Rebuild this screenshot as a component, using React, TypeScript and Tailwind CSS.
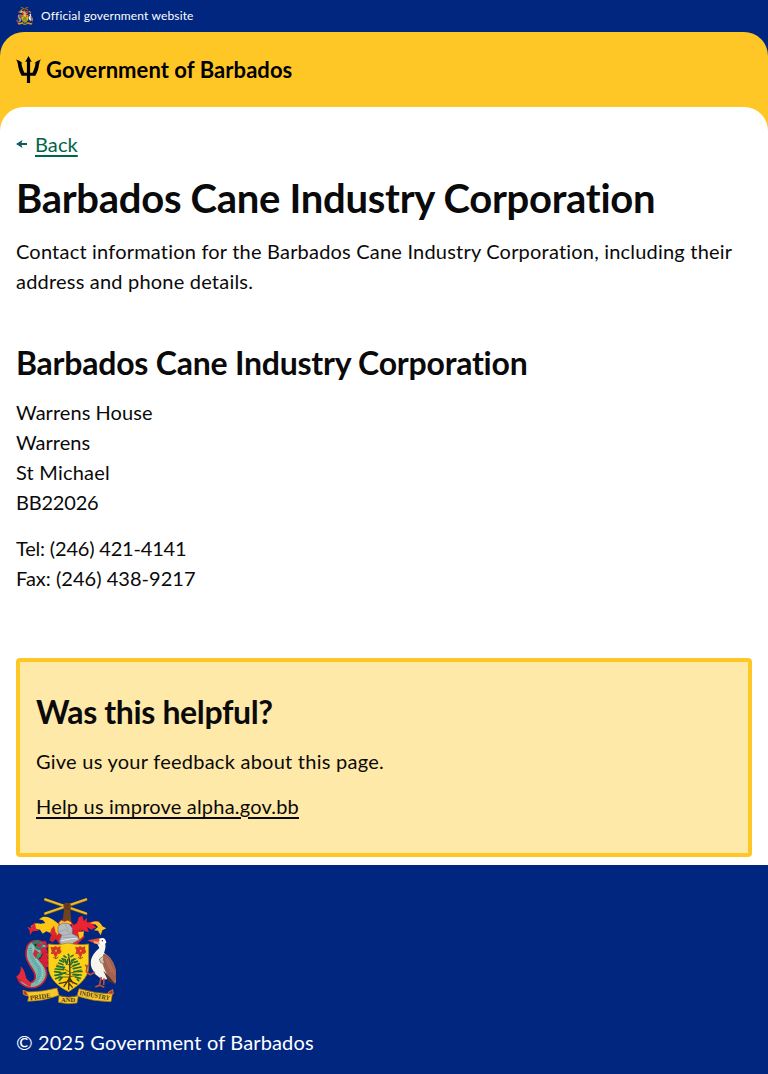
import React from "react";

function Crest({ className }: { className: string }) {
  return (
    <svg viewBox="48 36 300 324" className={className} role="img">
      {/* crossed canes and arm */}
      <g stroke="#8a6a1a" strokeWidth="9" strokeLinecap="round">
        <path d="M136 44 L258 86" />
        <path d="M136 86 L258 44" />
      </g>
      <g stroke="#f0bd22" strokeWidth="6" strokeLinecap="round">
        <path d="M136 43 L258 85" />
        <path d="M136 85 L258 43" />
      </g>
      <path d="M190 60 L196 53 L209 54 L214 62 L211 76 L214 112 L187 112 L192 76 Z" fill="#70421f" />
      <path d="M198 56 V68 M204 56 V68 M193 72 H210" stroke="#3f2512" strokeWidth="1.5" />
      {/* mantling */}
      <path d="M172 130 C162 140 152 150 148 166 L158 172 L168 162 L178 178 H232 L254 156 L242 140 L252 132 L244 122 L225 128 Z" fill="#d9232b" />
      <path d="M180 118 C164 112 154 92 128 96 L117 103 L129 106 L136 114 L122 116 C112 114 104 112 92 124 L106 132 L120 134 L128 146 L139 139 L151 144 L158 132 L166 136 L162 148 L172 150 L182 136 Z" fill="#fcc517" />
      <path d="M82 126 L92 128 L104 112 L108 130 L116 137 L98 139 L90 151 L89 137 Z" fill="#e32636" />
      <path d="M154 132 L162 122 L166 140 L172 148 L160 154 L150 146 Z" fill="#dd2930" />
      <path d="M216 116 C224 122 230 118 234 106 C234 96 240 92 248 94 L251 108 L261 98 L260 112 C274 112 286 104 300 110 L290 118 L278 119 L289 127 L274 134 L261 126 L267 142 L252 138 L242 129 L232 137 L214 128 Z" fill="#ec2330" />
      <path d="M270 115 C286 105 301 108 307 124 L319 130 L307 136 L302 151 L294 137 L282 136 L294 126 L286 118 Z" fill="#fcc41d" />
      <path d="M234 142 L252 139 L250 153 L239 163 Z" fill="#fcc41d" />
      {/* helmet */}
      <path d="M176 113 L184 105 L194 109 L203 105 L213 110 L218 118 L178 121 Z" fill="#f5c124" stroke="#c52127" strokeWidth="3" />
      <path d="M174 124 L187 115 L207 116 L217 130 L216 146 L232 154 L238 164 L214 177 L186 183 L178 168 L186 150 L174 143 Z" fill="#b6bbc0" stroke="#747980" strokeWidth="2" />
      <path d="M175 141 L196 134 L211 145 M187 151 L214 147 M189 158 L231 156 M195 119 L207 136" fill="none" stroke="#858a90" strokeWidth="1.5" />
      <path d="M185 167 L215 161 L231 161" fill="none" stroke="#eceeef" strokeWidth="3" />
      {/* dolphin */}
      <path d="M133 199 L150 207 L141 218 L153 228 L141 232 L150 246 L135 247 L139 267 L128 281 L117 229 Z" fill="#d91f38" />
      <path d="M82 183 C91 164 119 162 134 177 L143 183 L134 190 L140 198 C130 205 116 206 109 214 C119 228 142 243 140 269 C136 297 108 314 82 306 C66 302 57 290 53 279 C72 296 94 299 103 286 C112 270 98 254 88 238 C77 222 76 200 82 183 Z" fill="#78b8ad" stroke="#c91f38" strokeWidth="5" />
      <path d="M91 190 C91 212 101 229 113 242 C124 258 119 281 105 291" fill="none" stroke="#4f9aa5" strokeWidth="10" strokeDasharray="2 3" />
      <path d="M99 181 C100 212 107 223 119 239 C132 252 130 275 117 289" fill="none" stroke="#a9d8c8" strokeWidth="5" strokeDasharray="3 3" />
      <path d="M94 171 L115 164 L122 174 L137 177 L123 183 L139 189 L131 198 L109 193 Z" fill="#34796c" />
      <path d="M108 173 L128 181 L117 188 Z M104 193 L119 204 L107 220 L99 208 Z M120 170 L137 168 L141 179 L128 175 Z M122 190 L140 186 L136 200 L122 204 Z" fill="#dc2039" />
      <circle cx="107" cy="180" r="3" fill="#231f20" />
      <path d="M48 276 C61 267 63 258 62 244 C76 256 75 270 80 281 C87 289 98 293 91 305 C75 302 65 284 48 276 Z" fill="#e42b3d" />
      <path d="M111 205 L126 205 L121 217 L109 222 Z" fill="#31a362" />
      {/* shield */}
      <path d="M145 177 Q172 183 205 174 Q239 182 266 177 V244 C266 281 235 302 206 320 C174 305 146 280 145 245 Z" fill="#fcd116" stroke="#a98016" strokeWidth="2" />
      {[151, 225].map((x) => (
        <g key={x} transform={`translate(${x} 183)`}>
          <path d="M0 2 L9 4 L15 0 L22 4 L31 0 L30 10 L34 17 L28 24 L22 23 L20 31 L12 31 L10 24 L1 24 L4 15 Z" fill="#de392b" />
          <path d="M4 6 L13 14 L8 22 M29 6 L20 14 L26 22 M16 5 V26 M5 14 H29" stroke="#a33a1c" strokeWidth="1.5" fill="none" />
          <circle cx="17" cy="14" r="3" fill="#f6ad22" />
          <path d="M16 30 V38 L9 34 M17 38 L24 33" stroke="#8e4a18" strokeWidth="3" fill="none" />
        </g>
      ))}
      {/* bearded fig tree */}
      <path d="M206 216 L209 230 L210 281 L220 295 M207 277 L206 314 M206 283 L191 306 M204 290 L176 296 M207 287 L232 298 M206 294 L218 308" stroke="#4a2c12" strokeWidth="4" fill="none" />
      <path d="M207 260 L170 239 M207 269 L168 260 M207 250 L240 235 M207 266 L244 254 M207 275 L237 271 M207 240 L184 221 M207 234 L229 221 M207 276 L175 276" stroke="#4c4a16" strokeWidth="2.5" />
      <g stroke="#1f7133" strokeWidth="5" strokeLinecap="round" fill="none">
        <path d="M205 208 L207 213 M198 217 L192 213 M213 215 L219 211 M196 224 L187 221 M215 226 L224 222 M191 231 L179 226 M222 232 L232 229 M189 239 L176 234 M219 242 L237 236 M193 247 L170 244" />
        <path d="M190 254 L166 252 M181 262 L164 260 M185 268 L165 271 M197 263 L178 268 M220 251 L243 246 M222 260 L246 259 M219 268 L244 270 M226 276 L241 280 M181 276 L167 281 M200 238 L196 226 M211 240 L218 231 M186 278 L178 286 M232 283 L236 287 M203 224 L202 232" />
      </g>
      {/* pelican */}
      <path d="M306 165 C320 173 318 187 312 204 C335 218 352 245 347 292 L326 282 L307 284 L286 268 L275 249 C267 225 278 207 298 189 L291 174 Z" fill="#f7f4ed" />
      <path d="M310 207 C325 204 344 230 350 264 L346 298 L334 287 L320 268 L312 249 L306 232 Z" fill="#a5614d" />
      <path d="M314 214 L335 262 M322 220 L344 268" stroke="#b97a64" strokeWidth="3" />
      <path d="M310 257 L325 289 L347 299 L331 279" fill="#4a3234" />
      <path d="M298 222 L312 212 L310 226 L316 236 L302 233 Z" fill="#dcc7b8" stroke="#71564b" strokeWidth="2" />
      <path d="M262 166 L300 159 L317 166 L303 177 L280 173 Z" fill="#e94b2f" />
      <path d="M281 168 L302 171 L298 179 L282 175 Z" fill="#efad79" />
      <path d="M298 162 Q316 153 319 174 L305 181 L298 174 Z" fill="#fff" />
      <circle cx="307" cy="167" r="2.2" fill="#24211f" />
      <path d="M285 262 L270 269 L259 260 L261 247 L256 239 M261 247 L267 237 M304 276 L298 301 L286 306 M298 300 L313 307 M312 280 L311 300" stroke="#bc5138" strokeWidth="5" fill="none" />
      {/* motto ribbon */}
      <path d="M69 316 L85 321 L82 333 L70 328 Z M325 321 L338 314 L340 326 L327 334 Z" fill="#d52730" stroke="#f0ae1c" strokeWidth="2" />
      <path d="M78 321 Q128 321 171 309 L177 331 Q132 349 83 349 L86 336 Z M237 311 Q284 325 337 327 L333 350 Q279 350 231 333 Z M177 332 Q206 341 235 332 L231 354 Q203 359 175 352 Z" fill="#f8c72a" stroke="#a27518" strokeWidth="2" />
      <g fontFamily="Liberation Serif, serif" fontSize="20" fontWeight="700" fill="#473719">
        <text x="91" y="346" textLength="62" lengthAdjust="spacingAndGlyphs" transform="rotate(-8 91 346)">PRIDE</text>
        <text x="183" y="352" textLength="43" lengthAdjust="spacingAndGlyphs">AND</text>
        <text x="238" y="330" textLength="92" lengthAdjust="spacingAndGlyphs" transform="rotate(10 238 330)">INDUSTRY</text>
      </g>
    </svg>
  );
}

function Trident() {
  return (
    <svg viewBox="0 0 25 27" className="h-[27px] w-[25px]" fill="#000">
      <path d="M12.5 0 L15.8 6 Q14.7 5.4 14.1 5.4 V16.8 H16.6 C18.4 13 19.4 9.4 19.6 7 L18.2 7.4 Q20.6 4.4 25 3.5 Q23.6 5 23.2 7.8 C22.6 12 21.6 16 19.4 19.8 H14.1 V27 H10.9 V19.8 H5.6 C3.4 16 2.4 12 1.8 7.8 Q1.4 5 0 3.5 Q4.4 4.4 6.8 7.4 L5.4 7 C5.6 9.4 6.6 13 8.4 16.8 H10.9 V5.4 Q10.3 5.4 9.2 6 Z" />
    </svg>
  );
}

export default function App() {
  return (
    <div className="min-h-[1074px] bg-white font-['Lato',sans-serif] text-[20px] leading-[30px] text-[#0a0a0a]">
      <div className="bg-[#00267f]">
        <div className="flex h-8 items-center gap-2 px-4 text-white">
          <Crest className="h-[18px] w-[17px]" />
          <span className="text-[12px] leading-4 tracking-[0.15px]">Official government website</span>
        </div>
        <header className="rounded-t-[24px] bg-[#ffc726]">
          <div className="flex h-[75px] items-center gap-[5px] px-4">
            <Trident />
            <span className="text-[22px] leading-7 font-bold tracking-[0.06px] text-black">Government of Barbados</span>
          </div>
          <div className="h-6 rounded-t-[24px] bg-white" />
        </header>
      </div>
      <main className="-mt-0.5 px-4">
        <a href="#" className="flex h-[30px] w-fit items-center gap-2 text-[#00654a]">
          <svg viewBox="0 0 11 8" className="h-2 w-[11px]" fill="#0e5f64">
            <path d="M0 4 L6.5 0 L5.5 3 H11 V5 H5.5 L6.5 8 Z" />
          </svg>
          <span className="tracking-[0.1px] underline decoration-2 underline-offset-[3px]">Back</span>
        </a>
        <h1 className="mt-3.5 text-[40px] leading-[50px] font-bold tracking-[-0.29px] whitespace-nowrap">Barbados Cane Industry Corporation</h1>
        <p className="mt-[13px] tracking-[0.2px]">
          Contact information for the Barbados Cane Industry Corporation, including their<br />address and phone details.
        </p>
        <h2 className="mt-[47px] text-[32px] leading-[40px] font-bold tracking-[-0.23px]">Barbados Cane Industry Corporation</h2>
        <address className="mt-3.5 not-italic">
          <span className="tracking-[0.05px]">Warrens House</span><br />Warrens<br />
          <span className="tracking-[0.2px]">St Michael</span><br />
          <span className="tracking-[-0.2px]">BB22026</span>
        </address>
        <p className="mt-4">
          <span className="tracking-[-0.19px]">Tel: (246) 421-4141</span><br />
          <span className="tracking-[0.02px]">Fax: (246) 438-9217</span>
        </p>
        <section className="mt-[65px] mb-2 h-[199px] rounded-[4px] border-4 border-[#ffc726] bg-[#ffe9a8] px-4 pt-[30px]">
          <h2 className="text-[32px] leading-[40px] font-bold tracking-[-0.36px]">Was this helpful?</h2>
          <p className="mt-3.5 tracking-[0.25px]">Give us your feedback about this page.</p>
          <a href="#" className="mt-[15px] block w-fit tracking-[0.2px] underline decoration-2 underline-offset-[3px]">Help us improve alpha.gov.bb</a>
        </section>
      </main>
      <footer className="bg-[#00267f] px-4 pt-8 pb-[17px] text-white">
        <Crest className="h-[108px] w-[100px]" />
        <p className="mt-[22px] tracking-[0.15px]">© 2025 Government of Barbados</p>
      </footer>
    </div>
  );
}
